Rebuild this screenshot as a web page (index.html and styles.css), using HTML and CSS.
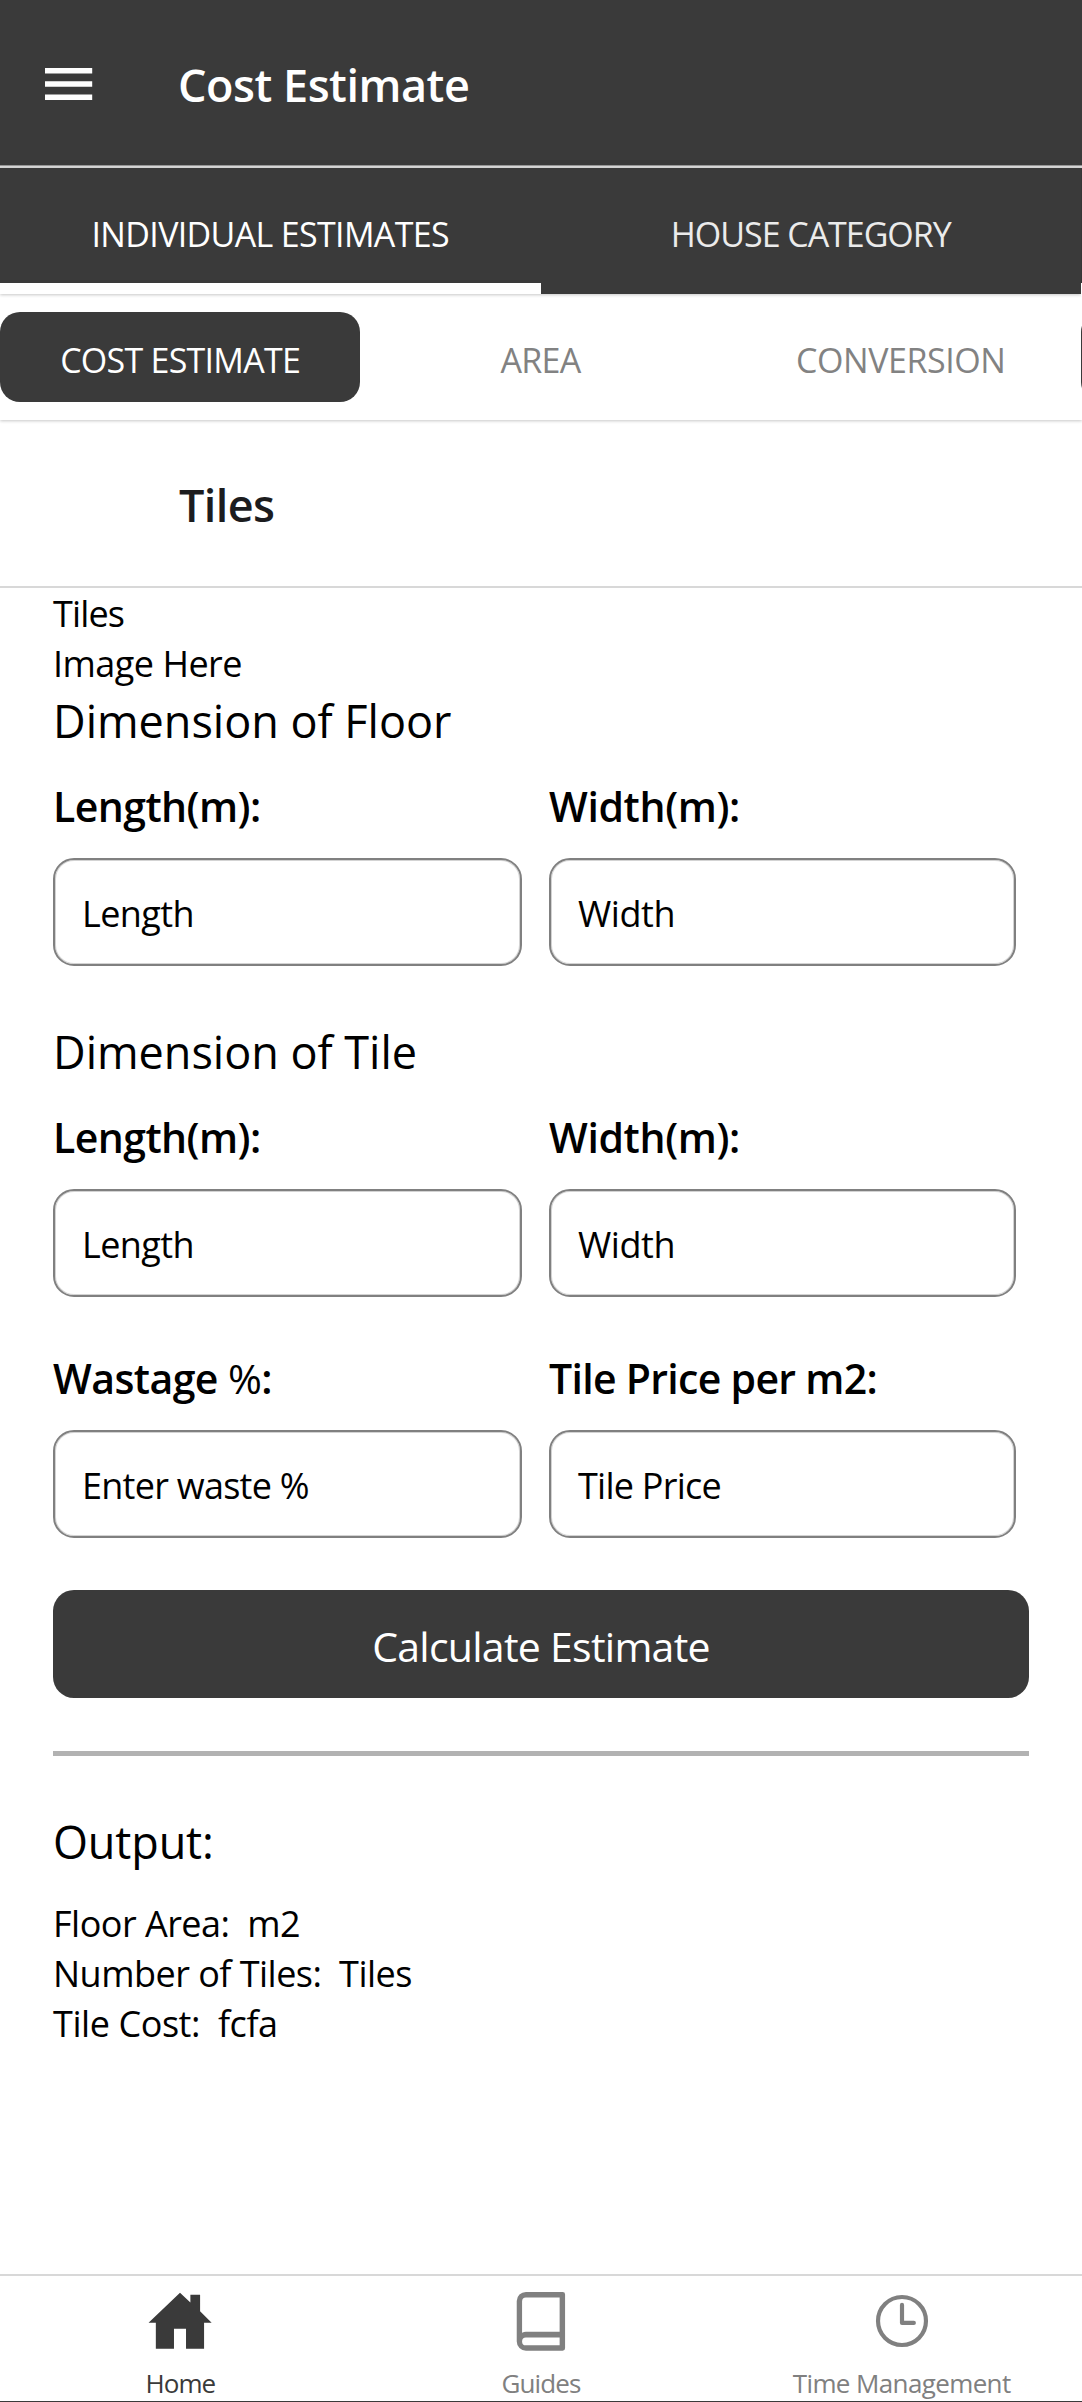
FILE: index.html
```html
<!DOCTYPE html>
<html lang="en">
<head>
<meta charset="utf-8">
<title>Cost Estimate</title>
<link rel="stylesheet" href="styles.css">
</head>
<body>
<div class="app">
  <header class="bar bar-dark">
    <svg class="menu" viewBox="0 0 48 32" width="48" height="32"><path fill="#fff" d="M0 0h47.2v5.5H0zM0 13.2h47.2v5.5H0zM0 26.4h47.2v5.5H0z"/></svg>
    <h1 class="bar-title">Cost Estimate</h1>
  </header>

  <nav class="tabs">
    <a class="tab tab-active ls-ind">INDIVIDUAL ESTIMATES</a>
    <a class="tab ls-house">HOUSE CATEGORY</a>
    <span class="tab-next"></span>
  </nav>

  <nav class="chips">
    <a class="chip chip-active">COST ESTIMATE</a>
    <a class="chip">AREA</a>
    <a class="chip ls-conv">CONVERSION</a>
    <a class="chip chip-active"></a>
  </nav>

  <div class="bar bar-light">
    <h2 class="bar-title ls-tiles">Tiles</h2>
  </div>

  <main class="content">
    <p class="line ls-t">Tiles</p>
    <p class="line">Image Here</p>

    <h3 class="section">Dimension of Floor</h3>
    <div class="fields">
      <label class="field"><span class="label">Length(m):</span><span class="input">Length</span></label>
      <label class="field"><span class="label ls-w">Width(m):</span><span class="input ls-wi">Width</span></label>
    </div>

    <h3 class="section section-next">Dimension of Tile</h3>
    <div class="fields">
      <label class="field"><span class="label">Length(m):</span><span class="input">Length</span></label>
      <label class="field"><span class="label ls-w">Width(m):</span><span class="input ls-wi">Width</span></label>
    </div>

    <div class="fields fields-next">
      <label class="field"><span class="label">Wastage <span class="thin">%</span>:</span><span class="input ls-p">Enter waste %</span></label>
      <label class="field"><span class="label ls-price">Tile Price per m2:</span><span class="input ls-p">Tile Price</span></label>
    </div>

    <button class="submit" type="button">Calculate Estimate</button>
    <hr class="rule">

    <h3 class="section ls-out">Output:</h3>
    <div class="results">
      <p class="line">Floor Area:&nbsp; m2</p>
      <p class="line">Number of Tiles:&nbsp; Tiles</p>
      <p class="line ls-cost">Tile Cost:&nbsp; fcfa</p>
    </div>
  </main>

  <nav class="bottom">
    <a class="item item-active">
      <svg viewBox="0 0 68 68" width="68" height="68"><path fill="currentColor" d="M34 5 44.7 15V7h10v17L66.6 35.7h-7.8v27H40.2V42H27.8v20.7H9.1v-27H1.6z"/></svg>
      <span class="ls-home">Home</span>
    </a>
    <a class="item">
      <svg viewBox="0 0 68 68" width="68" height="68"><path fill="currentColor" fill-rule="evenodd" d="M18.5 4H56.3a2.5 2.5 0 0 1 2.5 2.5V62.2a2.5 2.5 0 0 1-2.5 2.5H18.5A9.5 9.5 0 0 1 9 55.2V13.5A9.5 9.5 0 0 1 18.5 4zM18.5 9.9a4 4 0 0 0-4 4V46q2-.9 4-.9H53.2V9.9zM18.5 51a4 4 0 0 0 0 8H53.2v-8z"/></svg>
      <span class="ls-home">Guides</span>
    </a>
    <a class="item">
      <svg viewBox="0 0 68 68" width="68" height="68" fill="none" stroke="currentColor" stroke-width="4.3" stroke-linecap="round" stroke-linejoin="round"><circle cx="34" cy="34" r="24.7"/><path d="M34 17.4V36h12.2"/></svg>
      <span>Time Management</span>
    </a>
  </nav>
</div>
</body>
</html>
```
FILE: styles.css
```css
* { box-sizing: border-box; margin: 0; padding: 0; }

body {
  background: #fff;
  color: #000;
  font-family: "Open Sans", "Noto Sans", sans-serif;
  font-kerning: normal;
}

.app {
  display: flex;
  flex-direction: column;
  width: 1082px;
  height: 2402px;
  overflow: hidden;
  border-bottom: 1px solid #3a3a3a;
}

/* Title bars */
.bar {
  display: flex;
  align-items: center;
  height: 168px;
  padding-top: 2px;
  border-bottom: 2px solid #d8d8d8;
}
.bar-dark { background: #3a3a3a; color: #fff; box-shadow: inset 0 -1px #959595; }
.bar-light { color: #1c1c1e; padding-left: 179px; }
.menu { margin: 0 85px 0 45px; }
.bar-title { padding-top: 2px; font-size: 45px; font-weight: 600; line-height: 60px; letter-spacing: -.47px; }

/* Main tabs */
.tabs {
  position: relative;
  z-index: 1;
  display: flex;
  height: 126px;
  width: 1081px;
  background: #3a3a3a;
  color: #ebebeb;
  box-shadow: 0 1px 3px rgba(0, 0, 0, .22), 1px 0 #3a3a3a;
}
.tab {
  display: flex;
  flex: 1;
  align-items: center;
  justify-content: center;
  padding-top: 17px;
  font-size: 34px;
  border-bottom: 11px solid transparent;
}
.tab-active { color: #fff; border-bottom-color: #fff; }
.tab-next { position: absolute; left: 1081px; bottom: -2px; width: 1px; height: 13px; background: #fff; }

/* Scrolling category tabs */
.chips {
  display: flex;
  align-items: center;
  height: 126px;
  overflow: hidden;
  box-shadow: 0 1px 3px rgba(0, 0, 0, .22);
}
.chip {
  display: flex;
  flex: 0 0 360.3px;
  align-items: center;
  justify-content: center;
  height: 90px;
  padding-top: 6px;
  border-radius: 20px;
  font-size: 34px;
  letter-spacing: -.74px;
  color: #828282;
}
.chip-active { background: #3a3a3a; color: #fff; }

/* Form */
.content { flex: 1; padding: 1px 53px 0; font-size: 36px; }
.line { line-height: 50px; letter-spacing: -.52px; white-space: nowrap; }
.section { font-size: 45px; font-weight: 400; line-height: 64px; letter-spacing: -.02px; }
.section-next { margin-top: 54px; }
.fields { display: grid; grid-template-columns: 469px 467px; column-gap: 27px; margin-top: 25px; }
.fields-next { margin-top: 53px; }
.field { display: flex; flex-direction: column; gap: 24px; }
.label { font-size: 41px; font-weight: 600; line-height: 56px; letter-spacing: -.57px; white-space: nowrap; }
.thin { font-weight: 400; }
.input {
  display: flex;
  align-items: center;
  height: 108px;
  padding: 2px 27px 0;
  border: 2px solid #808080;
  border-radius: 21px;
  box-shadow: inset 0 0 0 1px rgba(128, 128, 128, .35);
  letter-spacing: -.59px;
}
.submit {
  display: block;
  width: 976px;
  height: 108px;
  margin-top: 52px;
  padding-top: 3px;
  border: 0;
  border-radius: 21px;
  background: #3a3a3a;
  color: #fff;
  font: 400 41px "Open Sans", sans-serif;
  letter-spacing: -.73px;
}
.rule { width: 976px; height: 5px; margin: 53px 0 54px; border: 0; background: #b2b2b2; }
.results { margin-top: 25px; }

/* Bottom navigation */
.bottom { display: flex; height: 127px; border-top: 2px solid #d8d8d8; }
.item {
  display: flex;
  flex: 1;
  flex-direction: column;
  align-items: center;
  gap: 11px;
  padding-top: 12px;
  font-size: 26px;
  line-height: 36px;
  letter-spacing: -.62px;
  color: #808080;
}
.item-active { color: #3a3a3a; }

/* Tracking per text */
.ls-ind { letter-spacing: -.66px; }
.ls-house { letter-spacing: -1.04px; }
.ls-conv { letter-spacing: -.42px; }
.ls-tiles { letter-spacing: -.6px; }
.ls-t { letter-spacing: -.85px; }
.ls-w { letter-spacing: -.37px; }
.ls-wi { letter-spacing: -.45px; }
.ls-p { letter-spacing: -.74px; }
.ls-price { letter-spacing: -.7px; }
.ls-out { letter-spacing: -.13px; }
.ls-cost { letter-spacing: -.43px; }
.ls-home { letter-spacing: -.9px; }
```
